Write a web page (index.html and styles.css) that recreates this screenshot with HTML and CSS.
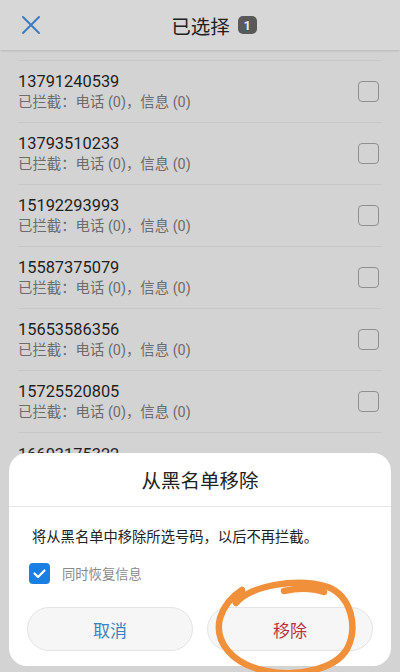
FILE: index.html
```html
<!DOCTYPE html>
<html lang="zh-CN">
<head>
<meta charset="utf-8">
<title>已选择</title>
<link rel="stylesheet" href="styles.css">
</head>
<body>
<div class="screen">
  <header class="topbar">
    <div class="close">
      <svg width="20" height="20" viewBox="0 0 20 20"><path d="M2 2 L18 18 M18 2 L2 18" stroke="#3d7bc0" stroke-width="2" fill="none" stroke-linecap="round"/></svg>
    </div>
    <div class="title">已选择<span class="badge">1</span></div>
    <div></div>
  </header>
  <ul class="list">
    <li class="row"><div class="info"><div class="num">13791240539</div><div class="sub">已拦截：电话 (0)，信息 (0)</div></div><span class="box"></span></li>
    <li class="row"><div class="info"><div class="num">13793510233</div><div class="sub">已拦截：电话 (0)，信息 (0)</div></div><span class="box"></span></li>
    <li class="row"><div class="info"><div class="num">15192293993</div><div class="sub">已拦截：电话 (0)，信息 (0)</div></div><span class="box"></span></li>
    <li class="row"><div class="info"><div class="num">15587375079</div><div class="sub">已拦截：电话 (0)，信息 (0)</div></div><span class="box"></span></li>
    <li class="row"><div class="info"><div class="num">15653586356</div><div class="sub">已拦截：电话 (0)，信息 (0)</div></div><span class="box"></span></li>
    <li class="row"><div class="info"><div class="num">15725520805</div><div class="sub">已拦截：电话 (0)，信息 (0)</div></div><span class="box"></span></li>
    <li class="row"><div class="info"><div class="num">16603175322</div></div></li>
  </ul>
  <div class="dialog">
    <div class="dlg-title">从黑名单移除</div>
    <div class="dlg-body">
      <p class="msg">将从黑名单中移除所选号码，以后不再拦截。</p>
      <div class="check-row">
        <span class="check">
          <svg width="21" height="21" viewBox="0 0 21 21"><path d="M5.5 10.5 L9 14 L15.5 7.5" stroke="#fff" stroke-width="2.2" fill="none" stroke-linecap="round" stroke-linejoin="round"/></svg>
        </span>
        <span class="check-label">同时恢复信息</span>
      </div>
      <div class="buttons">
        <button class="btn cancel">取消</button>
        <button class="btn remove">移除</button>
      </div>
    </div>
  </div>
  <svg class="scribble" width="400" height="672" viewBox="0 0 400 672">
    <path d="M236 603 C250 586 296 577 328 587 C352 597 358 628 347 649 C336 668 300 678 266 671 C232 664 214 642 220 618 C224 605 231 597 242 590" stroke="#f0903a" stroke-width="6.5" fill="none" stroke-linecap="round"/>
    <path d="M284 591 C298 588 312 588 324 592" stroke="#f0903a" stroke-width="6.5" fill="none" stroke-linecap="round"/>
  </svg>
</div>
</body>
</html>
```

FILE: styles.css
```css
* { box-sizing: border-box; }
html, body { margin: 0; padding: 0; }
body {
  font-family: Roboto, "Noto Sans CJK SC", sans-serif;
  background: #d3d3d3;
}
.screen {
  position: relative;
  width: 400px;
  height: 672px;
  overflow: hidden;
  background: #d3d3d3;
}
.topbar {
  height: 50px;
  display: grid;
  grid-template-columns: 60px 1fr 60px;
  align-items: center;
  background: #d7d7d7;
  box-shadow: 0 1px 2px rgba(0,0,0,0.12);
  position: relative;
}
.close {
  padding-left: 21px;
  display: flex;
  align-items: center;
}
.title {
  justify-self: center;
  display: flex;
  align-items: center;
  font-size: 19.5px;
  color: #222;
  padding-left: 28px;
}
.badge {
  display: inline-flex;
  align-items: center;
  justify-content: center;
  width: 19px;
  height: 18px;
  margin-left: 8px;
  border-radius: 5px;
  background: #595959;
  color: #e8e8e8;
  font-size: 13px;
  font-weight: bold;
}
.list {
  list-style: none;
  margin: 10px 18px 0;
  padding: 0;
  border-top: 1px solid #c7c7c7;
}
.row {
  height: 62px;
  display: flex;
  align-items: center;
  justify-content: space-between;
  padding-right: 3px;
  border-bottom: 1px solid #c7c7c7;
}
.row:last-child {
  align-items: flex-start;
  padding-top: 11px;
}
.info {
  display: flex;
  flex-direction: column;
}
.num {
  font-size: 16.4px;
  line-height: 22px;
  color: #1f1f1f;
}
.sub {
  font-size: 14.4px;
  line-height: 20px;
  color: #6c6c6c;
}
.box {
  width: 21px;
  height: 21px;
  border: 1.5px solid #8f8f8f;
  border-radius: 4px;
}
.dialog {
  position: absolute;
  left: 9px;
  top: 453px;
  width: 382px;
  height: 213px;
  background: #fff;
  border-radius: 18px;
}
.dlg-title {
  height: 54px;
  display: flex;
  align-items: center;
  justify-content: center;
  font-size: 19.5px;
  color: #222;
  border-bottom: 1px solid #e6e6e6;
}
.dlg-body {
  padding: 0 18px;
}
.msg {
  margin: 20px 0 0 5px;
  font-size: 14.3px;
  line-height: 20px;
  color: #222;
}
.check-row {
  display: flex;
  align-items: center;
  margin: 16px 0 0 2px;
  height: 21px;
}
.check {
  width: 21px;
  height: 21px;
  border-radius: 4px;
  background: #1a7fe2;
  display: flex;
}
.check-label {
  margin-left: 12px;
  font-size: 13.3px;
  color: #8a8a8a;
}
.buttons {
  display: flex;
  gap: 14px;
  margin-top: 23px;
}
.btn {
  flex: 1;
  height: 44px;
  border-radius: 22px;
  border: 1px solid #e4e4e4;
  background: #f6f6f6;
  font-family: Roboto, "Noto Sans CJK SC", sans-serif;
  font-size: 17px;
  padding: 0;
}
.cancel { color: #3b82c0; }
.remove { color: #b8353e; }
.scribble {
  position: absolute;
  left: 0;
  top: 0;
  pointer-events: none;
}
```
